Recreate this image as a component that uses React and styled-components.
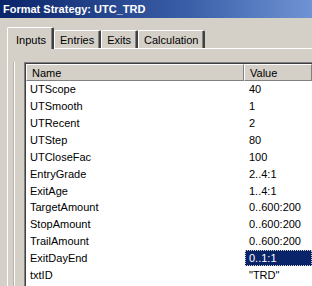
import React from 'react';
import styled, {createGlobalStyle} from 'styled-components';

const GlobalStyle = createGlobalStyle`
  html, body {
    margin: 0;
    padding: 0;
    background: #d4d0c8;
  }
  * {
    box-sizing: border-box;
  }
`

const inputs = [
  {name: 'UTScope', value: '40'},
  {name: 'UTSmooth', value: '1'},
  {name: 'UTRecent', value: '2'},
  {name: 'UTStep', value: '80'},
  {name: 'UTCloseFac', value: '100'},
  {name: 'EntryGrade', value: '2..4:1'},
  {name: 'ExitAge', value: '1..4:1'},
  {name: 'TargetAmount', value: '0..600:200'},
  {name: 'StopAmount', value: '0..600:200'},
  {name: 'TrailAmount', value: '0..600:200'},
  {name: 'ExitDayEnd', value: '0..1:1', selected: true},
  {name: 'txtID', value: '"TRD"'}
]

const tabs = ['Inputs', 'Entries', 'Exits', 'Calculation']

export default function App() {
  return (
    <Window>
      <GlobalStyle />
      <TitleBar>Format Strategy: UTC_TRD</TitleBar>
      <Body>
        <TabStrip>
          {tabs.map((t, i) => (
            <Tab key={t} active={i === 0}>{t}</Tab>
          ))}
        </TabStrip>
        <Panel>
          <Groove />
          <ListView>
            <HeaderRow>
              <HeaderCell width={218}>Name</HeaderCell>
              <HeaderCell>Value</HeaderCell>
            </HeaderRow>
            {inputs.map(row => (
              <Row key={row.name}>
                <NameCell>{row.name}</NameCell>
                <ValueCell selected={row.selected}>{row.value}</ValueCell>
              </Row>
            ))}
          </ListView>
        </Panel>
      </Body>
    </Window>
  )
}

const Window = styled.div`
  width: 312px;
  height: 286px;
  overflow: hidden;
  display: flex;
  flex-direction: column;
  font-family: "Liberation Sans", Arial, sans-serif;
  font-size: 11px;
  color: #000;
`

const TitleBar = styled.div`
  height: 18px;
  flex-shrink: 0;
  padding-left: 3px;
  display: flex;
  align-items: center;
  background: linear-gradient(to right, #0a246a 0%, #3a5fa8 60%, #6f93d3 100%);
  color: #fff;
  font-weight: bold;
  font-size: 11px;
`

const Body = styled.div`
  flex: 1;
  display: flex;
  flex-direction: column;
  padding: 9px 0 0 7px;
`

const TabStrip = styled.div`
  display: flex;
  align-items: flex-end;
  height: 21px;
  position: relative;
  z-index: 1;
`

const Tab = styled.div`
  height: ${p => p.active ? '22px' : '18px'};
  margin-bottom: ${p => p.active ? '-1px' : '0'};
  padding: ${p => p.active ? '2px 6px 0 8px' : '1px 5px 0 5px'};
  background: #d4d0c8;
  border-top: 1px solid #fff;
  border-left: 1px solid #fff;
  border-right: 2px solid #404040;
  border-radius: 2px 2px 0 0;
  box-shadow: inset -1px 0 0 #808080;
  display: flex;
  align-items: center;
  font-size: 11px;
`

const Panel = styled.div`
  flex: 1;
  display: flex;
  border-top: 1px solid #fff;
  border-left: 1px solid #fff;
  padding: 13px 0 0 6px;
`

const Groove = styled.div`
  width: 1px;
  margin-right: 9px;
  background: #fff;
  box-shadow: -1px 0 0 #b8b4ac;
`

const ListView = styled.div`
  flex: 1;
  background: #fff;
  border-top: 1px solid #808080;
  border-left: 1px solid #808080;
  box-shadow: inset 1px 1px 0 #404040;
  padding: 1px 0 0 1px;
`

const HeaderRow = styled.div`
  display: flex;
  height: 17px;
`

const HeaderCell = styled.div`
  ${p => p.width ? `width: ${p.width}px;` : 'flex: 1;'}
  background: #d4d0c8;
  border-top: 1px solid #fff;
  border-left: 1px solid #fff;
  border-bottom: 1px solid #808080;
  border-right: 1px solid #808080;
  box-shadow: inset 0 -1px 0 #d4d0c8;
  padding-left: 5px;
  display: flex;
  align-items: center;
`

const Row = styled.div`
  display: flex;
  height: 16.87px;
  align-items: stretch;
`

const NameCell = styled.div`
  width: 218px;
  padding-left: 4px;
  display: flex;
  align-items: center;
`

const ValueCell = styled.div`
  flex: 1;
  margin-left: 1px;
  padding-left: 4px;
  display: flex;
  align-items: center;
  background: ${p => p.selected ? '#0a246a' : 'transparent'};
  color: ${p => p.selected ? '#fff' : '#000'};
  outline: ${p => p.selected ? '1px dotted #d4d0c8' : 'none'};
  outline-offset: -1px;
`
